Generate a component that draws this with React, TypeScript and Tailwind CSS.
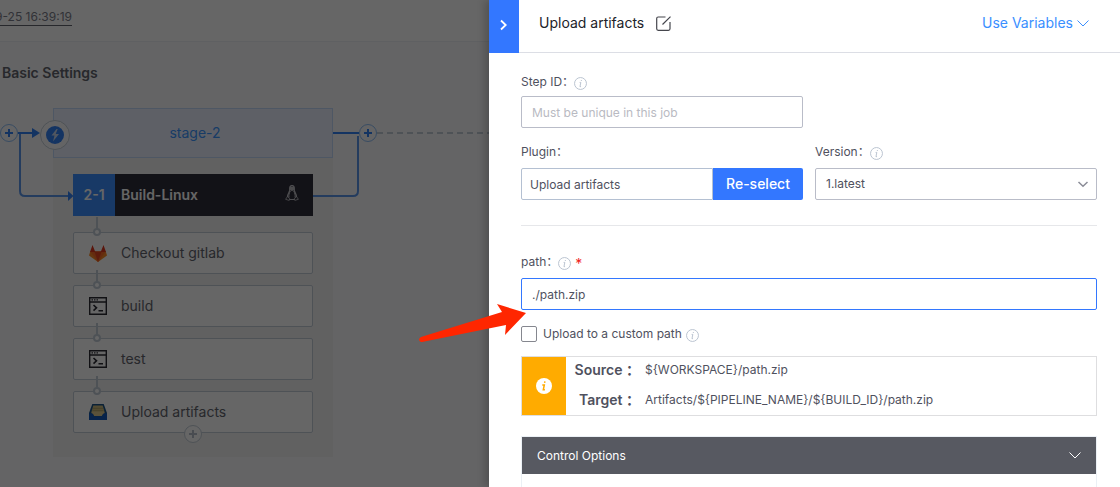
import React from "react";

const font = "font-['Inter','Noto_Sans_CJK_SC',sans-serif]";

function InfoIcon() {
  return (
    <svg className="size-[13px] shrink-0" viewBox="0 0 12 12" fill="none" stroke="#b9c2d0" strokeWidth="0.9" aria-hidden="true">
      <circle cx="6" cy="6" r="5.5" />
      <path d="M6.9 2.8l-.2.9M5.2 5h1.1L5.5 8.9h1" />
    </svg>
  );
}

function GitlabIcon() {
  return (
    <svg className="h-[17px] w-[18px]" viewBox="0 0 18 17" aria-hidden="true">
      <path d="M9 17L0 10.500L1.200 6.500h15.600L18 10.500z" fill="#fc8a26" />
      <path d="M9 17L1.200 6.500h15.600z" fill="#fc6d26" />
      <path d="M9 17L5.400 6.500h7.200z" fill="#e8481f" />
      <path d="M1 7L3.500 0l2.800 7zM17 7L14.500 0l-2.800 7z" fill="#e2381f" />
    </svg>
  );
}

function TerminalIcon() {
  return (
    <svg className="size-[18px]" viewBox="0 0 18 18" fill="none" stroke="#2b2b33" aria-hidden="true">
      <path d="M.7.7h16.600v16.600H.7zM.7 5h16.600" strokeWidth="1.400" />
      <path d="M2.500 2.900h1.500M5 2.900h1.500M7.500 2.900H9" strokeWidth="1.300" />
      <path d="M4.500 8l3 2.800-3 2.800M9.500 13.800h4.500" strokeWidth="1.600" />
    </svg>
  );
}

function TrayIcon() {
  return (
    <svg className="h-4 w-[18px]" viewBox="0 0 18 16" aria-hidden="true">
      <path d="M3.300 0h11.400L18 9v7H0V9z" fill="#1c5487" />
      <path d="M4.300 1.500h9.400L16 9.500H2z" fill="#cfbc7d" />
      <path d="M4 4.300h10M3.300 6.800h11.400" stroke="#a09562" strokeWidth="0.700" />
      <path d="M0 9.300h3.400l1.600 2.900h8l1.600-2.900H18V16H0z" fill="#1259b8" />
      <path d="M3 7.500h12v2h-.8l-1.400 2.500H5.200L3.800 9.500H3z" fill="#e0cd92" />
    </svg>
  );
}

function PenguinIcon() {
  return (
    <svg className="h-4 w-[14px]" viewBox="0 0 14 16" fill="none" stroke="#c4c4ca" aria-hidden="true">
      <path d="M4.800 5.500C4.500 2 5 .6 7 .6s2.500 1.400 2.200 4.900c.4 1.500 2.300 3.500 2.300 6.500M4.800 5.500C4.400 7 2.500 9 2.500 12" strokeWidth="1.300" />
      <path d="M5.300 6c-1 2-1.800 4-1.300 6.500M8.700 6c1 2 1.800 4 1.300 6.500M4.500 14.500h5" />
      <path d="M2.500 11.500L.6 14.300l3.600 1.100.6-1.500zM11.500 11.500l1.900 2.800-3.600 1.100-.6-1.500z" strokeWidth="0.800" />
      <path d="M4.900 1.800h4.200v3L7 6.200 4.900 4.800z" fill="#b8b8be" stroke="none" />
    </svg>
  );
}

const steps = [
  { name: "Checkout gitlab", icon: <GitlabIcon /> },
  { name: "build", icon: <TerminalIcon /> },
  { name: "test", icon: <TerminalIcon /> },
  { name: "Upload artifacts", icon: <TrayIcon /> },
];

function Connectors() {
  return (
    <svg className="absolute inset-0 h-full w-full" fill="none" aria-hidden="true">
      <path d="M18 91h16M333 91h26" stroke="#3482f6" strokeWidth="2" />
      <path d="M32 86l8 5-8 5z" fill="#3482f6" />
      <path d="M20 92v57q0 5 5 5h43M313 154h40q5 0 5-5V94" stroke="#5b96ec" strokeWidth="2" />
      <path d="M68 149l5.500 5-5.500 5z" fill="#3482f6" />
      <path d="M377 91h140" stroke="#c3cdd7" strokeWidth="2" strokeDasharray="6 4" />
      <g fill="#fafbfd" stroke="#8dbdf5">
        <circle cx="9" cy="91" r="8.500" />
        <circle cx="368" cy="91" r="8.500" />
      </g>
      <path d="M5 91h8M9 87v8M364 91h8M368 87v8" stroke="#3482f6" strokeWidth="2" />
      <circle cx="55" cy="93" r="14.500" fill="#fafbfd" stroke="#c3cdd7" />
      <circle cx="55" cy="93" r="9" fill="#3482f6" />
      <path d="M56.500 87l-5 6.500h3l-1.500 6 6-7.500h-3.300l2-5z" fill="#c8d8f0" />
    </svg>
  );
}

function Pipeline() {
  return (
    <main className="relative min-w-0 flex-1 overflow-hidden bg-[#fafbfd]">
      <header className="flex h-[42px] items-start border-b border-[#eef1f6] bg-white pt-2">
        <div className="flex w-[72px] justify-end overflow-hidden">
          <time className="shrink-0 border-b border-[#63656e] text-xs leading-[17px] text-[#7b7d8a]">
            9-25 16:39:19
          </time>
        </div>
      </header>
      <section className="relative h-full">
        <h2 className="pt-[21px] pl-0.5 text-sm leading-5 font-semibold text-[#63656e]">Basic Settings</h2>
        <div className="mt-[25px] ml-[53px] w-[280px] bg-[#f3f3f3] pb-6">
          <div className="flex h-[50px] items-center justify-center border border-[#c2dafb] bg-[#ebf0ff] pl-1 text-sm text-[#3c96ff]">
            stage-2
          </div>
          <div className="mx-5 mt-4 flex h-[42px] items-center bg-[#2f2e3a] text-sm font-semibold text-white">
            <span className="flex h-full w-[42px] items-center justify-center bg-[#3c8fff]">2-1</span>
            <span className="flex-1 pl-1.5">Build-Linux</span>
            <span className="pr-3.5 pb-1"><PenguinIcon /></span>
          </div>
          <ol className="mx-5 mt-4 flex flex-col gap-[11px]">
            {steps.map((step) => (
              <li key={step.name} className="relative flex h-[42px] items-center rounded-xs border border-[#c3cdd7] bg-white pl-[15px] text-sm text-[#63656e]">
                <svg className="absolute -top-4 left-[19px] h-5 w-2" fill="none" stroke="#c3cdd7" strokeWidth="2" aria-hidden="true">
                  <path d="M4 0v12" />
                  <circle cx="4" cy="15" r="3" fill="#fff" />
                </svg>
                <span className="w-[18px]">{step.icon}</span>
                <span className="pl-[14px]">{step.name}</span>
              </li>
            ))}
          </ol>
        </div>
        <Connectors />
        <button type="button" aria-label="Add step" className="absolute top-[383px] left-[184px] size-[18px] rounded-full border border-[#c3cdd7] bg-white">
          <svg className="size-4" viewBox="0 0 16 16" stroke="#b6bfca" strokeWidth="2" aria-hidden="true">
            <path d="M4 8h8M8 4v8" />
          </svg>
        </button>
      </section>
      <div className="absolute inset-0 bg-black/60" />
    </main>
  );
}

function Label({ htmlFor, children, info, required }: { htmlFor: string; children: React.ReactNode; info?: boolean; required?: boolean }) {
  return (
    <div className="flex h-5 items-center text-xs leading-5">
      <label htmlFor={htmlFor}>{children}</label>
      {info && <span className="pt-0.5"><InfoIcon /></span>}
      {required && <span className="pt-1 pl-1 text-sm leading-4 text-[#f01d1d]">*</span>}
    </div>
  );
}

const field = "h-8 w-full rounded-xs border bg-white px-2.5 text-xs outline-none";

function Drawer() {
  return (
    <aside className="relative flex w-[631px] shrink-0 flex-col bg-white text-[#4f515e] shadow-[-4px_0_8px_rgba(0,0,0,0.2)]">
      <header className="flex h-[53px] items-center border-b border-[#dcdee5]">
        <button type="button" aria-label="Close panel" className="-mb-px flex h-[53px] w-[30px] items-center justify-center bg-[#3377ff] pb-1">
          <svg className="h-3 w-2" viewBox="0 0 8 12" fill="none" stroke="#fff" strokeWidth="1.800" aria-hidden="true">
            <path d="M1 1.500L5.700 6 1 10.500" />
          </svg>
        </button>
        <div className="flex flex-1 items-center gap-3 pr-[31px] pb-1.5 pl-5 text-sm">
          <h1 className="text-[#222329]">Upload artifacts</h1>
          <button type="button" aria-label="Rename">
            <svg className="size-[15px]" viewBox="0 0 15 15" fill="none" stroke="#45464d" strokeWidth="1.200" aria-hidden="true">
              <path d="M9.500 1H2.200Q.7 1 .7 2.500v10.300q0 1.500 1.500 1.500h10.300q1.500 0 1.500-1.500V6M6.500 8.500L14.500.6" />
            </svg>
          </button>
          <button type="button" className="ml-auto flex items-center gap-1 text-[#3a8fff]">
            Use Variables
            <svg className="h-[7px] w-3" viewBox="0 0 12 7" fill="none" stroke="#3a8fff" aria-hidden="true">
              <path d="M.5.5L6 6 11.500.5" />
            </svg>
          </button>
        </div>
      </header>
      <div className="pt-[19px] pr-[23px] pl-8">
        <div className="grid grid-cols-2 gap-x-3">
          <div className="col-span-2 grid grid-cols-2 gap-3">
            <div>
              <Label htmlFor="step-id" info>Step ID：</Label>
              <input id="step-id" placeholder="Must be unique in this job" className={`${field} mt-1 border-[#b9bcc8] placeholder:text-[#b9bac2]`} />
            </div>
          </div>
          <div className="pt-3.5">
            <Label htmlFor="plugin">Plugin：</Label>
            <div className="mt-1.5 flex">
              <input id="plugin" readOnly value="Upload artifacts" className="h-8 min-w-0 flex-1 rounded-l-xs border border-[#b4c0d2] px-2 text-xs outline-none" />
              <button type="button" className="h-8 w-[90px] rounded-r-xs bg-[#3377ff] text-sm font-medium text-white">Re-select</button>
            </div>
          </div>
          <div className="pt-3.5">
            <Label htmlFor="version" info>Version：</Label>
            <div className="relative mt-1.5">
              <select id="version" className={`${field} appearance-none border-[#b9bcc8]`}>
                <option>1.latest</option>
              </select>
              <svg className="pointer-events-none absolute top-3 right-2 h-2 w-3" viewBox="0 0 12 8" fill="none" stroke="#8b8d98" strokeWidth="1.500" aria-hidden="true">
                <path d="M1.500 2L6 6.300 10.500 2" />
              </svg>
            </div>
          </div>
        </div>
        <hr className="mt-[25px] border-[#e6e7ea]" />
        <div className="pt-[26px]">
          <Label htmlFor="path" info required>path：</Label>
          <input id="path" defaultValue="./path.zip" className={`${field} mt-1.5 border-[#3377ff]`} />
        </div>
        <div className="mt-3.5 flex h-5 items-center text-xs">
          <input id="custom-path" type="checkbox" className="size-4 appearance-none rounded-xs border border-[#85878f] bg-white" />
          <label htmlFor="custom-path" className="pr-1 pl-1.5">Upload to a custom path</label>
          <span className="pt-0.5"><InfoIcon /></span>
        </div>
        <div className="mt-3 flex h-[60px] border border-[#dedee0]">
          <div className="flex w-11 items-center justify-center bg-[#ffab00]">
            <svg className="size-4" viewBox="0 0 16 16" aria-hidden="true">
              <circle cx="8" cy="8" r="8" fill="#fff" />
              <path d="M8.900 3.300L8.600 4.900M6.300 7h2l-1 4.800h1.600" fill="none" stroke="#ffab00" strokeWidth="1.500" />
            </svg>
          </div>
          <dl className="grid flex-1 grid-cols-[74px_1fr] content-start gap-y-2.5 pt-[3px] text-xs leading-5">
            <dt className="text-right text-sm leading-5 font-semibold">Source ：</dt>
            <dd className="pl-[5px]">{"${WORKSPACE}/path.zip"}</dd>
            <dt className="text-right text-sm leading-5 font-semibold">Target ：</dt>
            <dd className="pl-[5px]">{"Artifacts/${PIPELINE_NAME}/${BUILD_ID}/path.zip"}</dd>
          </dl>
        </div>
        <section className="mt-5 border border-[#ebf0f5]">
          <button type="button" className="flex h-[37px] w-full items-center justify-between bg-[#575961] pr-[15px] pl-[15px] text-xs text-white">
            Control Options
            <svg className="h-[7px] w-3" viewBox="0 0 12 7" fill="none" stroke="#fff" aria-hidden="true">
              <path d="M.5.5L6 6 11.500.5" />
            </svg>
          </button>
          <div className="h-6" />
        </section>
      </div>
    </aside>
  );
}

export default function App() {
  return (
    <div className={`relative flex h-screen overflow-hidden ${font}`}>
      <Pipeline />
      <Drawer />
      <svg className="pointer-events-none absolute top-[303px] left-[418px] h-10 w-[110px]" viewBox="0 0 110 40" aria-hidden="true">
        <path d="M108 10L79 1l5 8L3 34q-2 1-2 3 1 2.500 3 2l84-17-1 10z" fill="#ff2600" />
      </svg>
    </div>
  );
}
